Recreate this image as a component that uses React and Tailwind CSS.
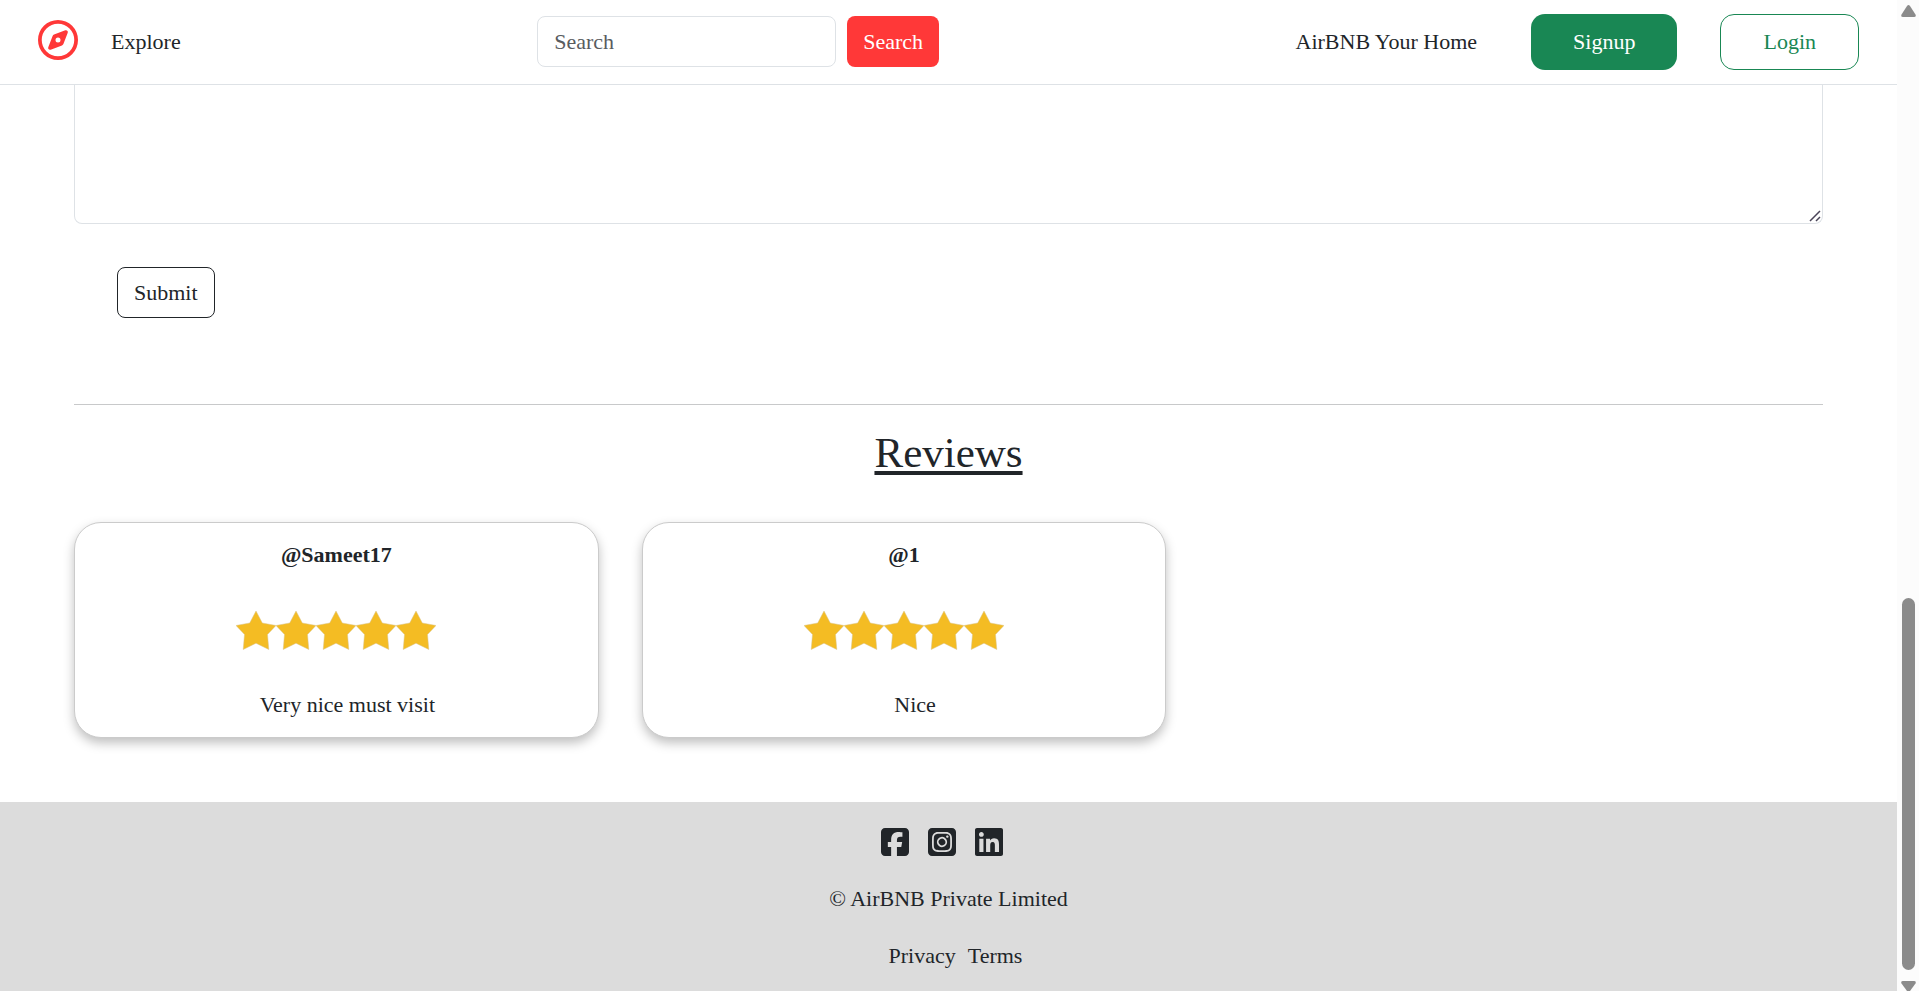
import { useState } from 'react'
import { FaRegCompass, FaSquareFacebook, FaSquareInstagram, FaLinkedin } from 'react-icons/fa6'

const reviews = [
  { id: 1, author: 'Sameet17', rating: 5, comment: 'Very nice must visit' },
  { id: 2, author: '1', rating: 5, comment: 'Nice' }
]

function Navbar() {
  const [query, setQuery] = useState('')

  return (
    <nav className="flex h-[85px] shrink-0 items-center border-b border-[#dee2e6] bg-white pr-[38px] pb-px pl-[38px]">
      <a href="#" aria-label="Home" className="-mt-1 text-[#ff3838]">
        <FaRegCompass className="h-10 w-10" />
      </a>
      <a href="#" className="ml-[22px] px-[11px]">Explore</a>

      <form className="mx-auto flex gap-[11px]" onSubmit={(e) => e.preventDefault()}>
        <input
          type="search"
          aria-label="Search"
          placeholder="Search"
          value={query}
          onChange={(e) => setQuery(e.target.value)}
          className="h-[51px] w-[299px] rounded-lg border border-[#dee2e6] px-4 placeholder:text-[#595c5f]"
        />
        <button type="submit" className="h-[51px] rounded-lg bg-[#ff3838] px-4 text-white">Search</button>
      </form>

      <div className="flex items-center">
        <a href="#" className="mr-[43px] px-[11px]">AirBNB Your Home</a>
        <button className="mr-[43px] h-14 rounded-[14px] bg-[#198754] px-[42px] text-white">Signup</button>
        <button className="h-14 rounded-[14px] border border-[#198754] px-[42px] text-[#198754]">Login</button>
      </div>
    </nav>
  )
}

function Stars({ rating }) {
  return (
    <div className="flex justify-center" role="img" aria-label={`Rated ${rating} stars`}>
      {Array.from({ length: rating }, (_, i) => (
        <svg key={i} viewBox="0 0 40 40" className="h-10 w-10">
          <path
            d="M20 1L26.300 13L40 15.500L31.500 24.500L32.800 39.500L20 33.200L7.200 39.500L8.500 24.500L0 15.500L13.700 13Z"
            fill="#f4bc23"
            stroke="#d9c48c"
            strokeWidth="0.500"
          />
        </svg>
      ))}
    </div>
  )
}

function ReviewCard({ review }) {
  return (
    <div className="w-[30%] rounded-[27px] border border-[#cbcbcb] bg-white p-4 text-center shadow-[0_5px_11px_rgba(0,0,0,0.25)]">
      <h3 className="font-bold">@{review.author}</h3>
      <div className="py-[39px]">
        <Stars rating={review.rating} />
      </div>
      <p className="pl-[22px]">{review.comment}</p>
    </div>
  )
}

function Footer() {
  return (
    <footer className="flex flex-1 flex-col items-center bg-[#dcdcdc] pt-6">
      <div className="flex gap-[19px] pr-[14px]">
        <a href="#" aria-label="Facebook"><FaSquareFacebook className="h-8 w-7" /></a>
        <a href="#" aria-label="Instagram"><FaSquareInstagram className="h-8 w-7" /></a>
        <a href="#" aria-label="LinkedIn"><FaLinkedin className="h-8 w-7" /></a>
      </div>
      <div className="mt-[25px]">© AirBNB Private Limited</div>
      <div className="mt-[25px] flex gap-3 pl-[14px]">
        <a href="#">Privacy</a>
        <a href="#">Terms</a>
      </div>
    </footer>
  )
}

function Scrollbar() {
  return (
    <div aria-hidden="true" className="flex w-[22px] shrink-0 flex-col items-center bg-[#fcfcfc] pt-[5px]">
      <svg viewBox="0 0 15 12" className="h-3 w-[15px] shrink-0">
        <path d="M6 1Q7.500 -1 9 1L14.500 9.500Q15.500 12 13 12H2Q-0.500 12 0.500 9.500Z" fill="#8b8b8b" />
      </svg>
      <div className="flex-1" />
      <div className="h-[372px] w-[13px] rounded-full bg-[#8b8b8b]" />
      <svg viewBox="0 0 15 10" className="mt-[11px] h-[10px] w-[15px] shrink-0">
        <path d="M2 0H13Q15.500 0 14.500 2.500L9 10H6L0.500 2.500Q-0.500 0 2 0Z" fill="#8b8b8b" />
      </svg>
    </div>
  )
}

export default function App() {
  const [comment, setComment] = useState('')

  return (
    <div className="flex h-screen overflow-hidden bg-white font-['Liberation_Serif',serif] text-[22px] leading-8 text-[#212529]">
      <div className="flex min-w-0 flex-1 flex-col">
        <Navbar />

        <main className="px-[74px] pb-16">
          {/* Review form */}
          <form onSubmit={(e) => e.preventDefault()}>
            <div className="relative">
              <textarea
                aria-label="Comments"
                value={comment}
                onChange={(e) => setComment(e.target.value)}
                className="block h-[139px] w-full resize-y rounded-b-lg border border-t-0 border-[#dee2e6] px-4 py-2 [&::-webkit-resizer]:bg-transparent"
              />
              {/* Resize grip */}
              <svg viewBox="0 0 12 12" className="pointer-events-none absolute right-[2px] bottom-[2px] h-3 w-3">
                <path d="M1 11L11 1M7 11L11 7" stroke="#4a4458" strokeWidth="1.500" />
              </svg>
            </div>
            <button type="submit" className="mt-[43px] ml-[43px] h-[51px] rounded-lg border border-[#212529] px-4">
              Submit
            </button>
          </form>

          <hr className="mt-[86px] border-[#c8c9ca]" />

          {/* Reviews */}
          <h2 className="mt-[22px] text-center text-[43px] leading-[51px] underline decoration-4 underline-offset-4">Reviews</h2>
          <div className="mt-11 flex gap-[43px]">
            {reviews.map((review) => (
              <ReviewCard key={review.id} review={review} />
            ))}
          </div>
        </main>

        <Footer />
      </div>
      <Scrollbar />
    </div>
  )
}
